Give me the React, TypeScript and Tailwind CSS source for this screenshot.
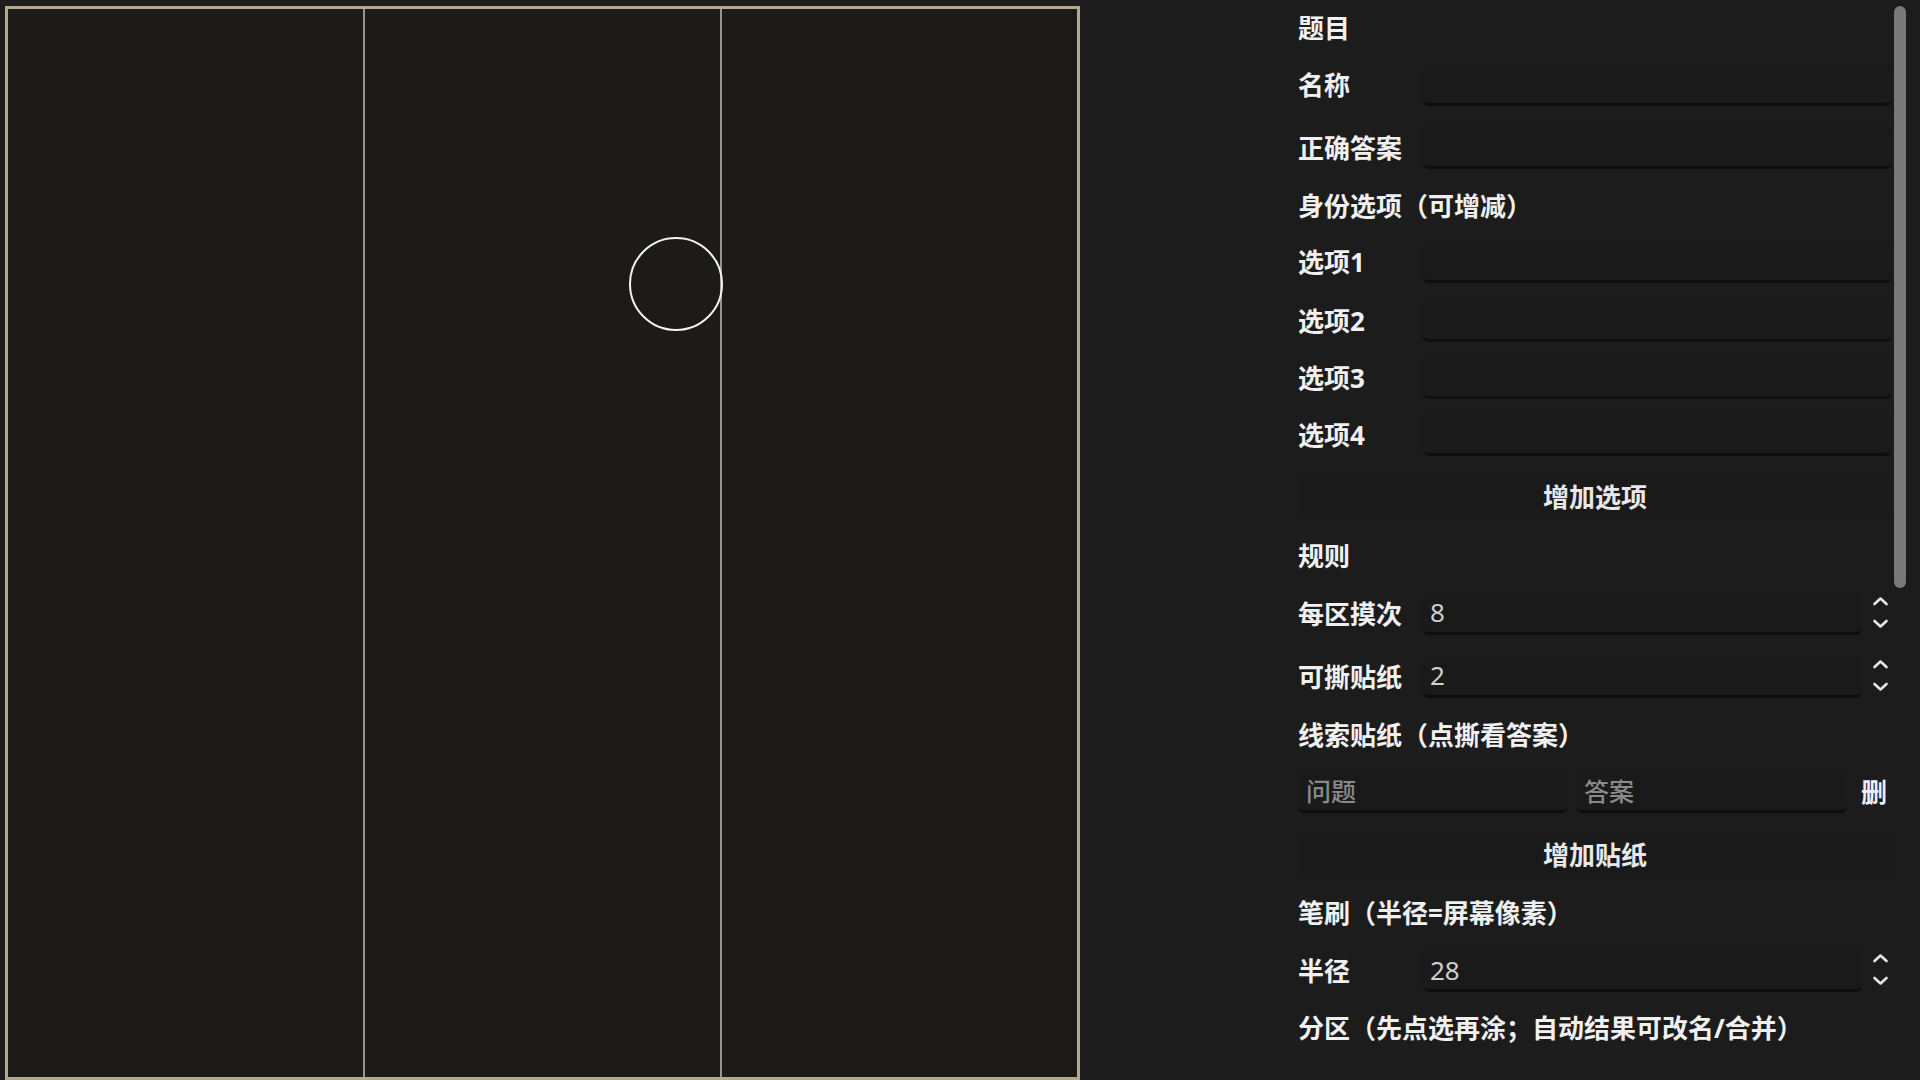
import React from "react";

const FONT = { fontFamily: '"Noto Sans", "Noto Sans CJK SC", sans-serif' };

function Heading({ text, h }: { text: string; h: string }) {
  return (
    <div className={`flex items-center ${h}`}>
      <span className="text-[26px] font-bold text-[#f0f0f0] leading-none">{text}</span>
    </div>
  );
}

function Spin() {
  return (
    <div className="w-[30px] pl-[6px] flex flex-col items-center gap-[13px] mb-[3px]">
      <svg width="17" height="10" viewBox="0 0 17 10">
        <path d="M2.5 8 L8.5 2.5 L14.5 8" fill="none" stroke="#e4e4e4" strokeWidth="2.6" strokeLinecap="round" strokeLinejoin="round" />
      </svg>
      <svg width="17" height="10" viewBox="0 0 17 10">
        <path d="M2.5 2 L8.5 7.5 L14.5 2" fill="none" stroke="#e4e4e4" strokeWidth="2.6" strokeLinecap="round" strokeLinejoin="round" />
      </svg>
    </div>
  );
}

function Field({ label, h, value, number }: { label: string; h: string; value?: string; number?: boolean }) {
  return (
    <div className={`flex items-center ${h}`}>
      <span className="w-[125px] shrink-0 text-[26px] font-bold text-[#f0f0f0] leading-none">{label}</span>
      <input
        readOnly
        defaultValue={value ?? ""}
        className="flex-1 min-w-0 h-[42px] rounded-md bg-[#1a1a1a] border-b-[3px] border-[#0e0e0e] pl-[7px] text-[26px] text-[#cfcfcf] outline-none"
        style={FONT}
      />
      {number && <Spin />}
    </div>
  );
}

function Button({ text, h }: { text: string; h: string }) {
  return (
    <div className={`flex items-center ${h}`}>
      <div className="w-full h-[40px] rounded-md bg-[#1a1a1a] flex items-center justify-center">
        <span className="text-[26px] font-semibold text-[#e8e8e8] leading-none">{text}</span>
      </div>
    </div>
  );
}

export default function App() {
  return (
    <div className="w-[1920px] h-[1080px] bg-[#1c1c1c] flex overflow-hidden" style={FONT}>
      <div className="ml-[5px] mt-[6px] w-[1075px] h-[1074px] shrink-0 border-[3px] border-[#b3aa8e] bg-[#1c1b1a] relative flex">
        <div className="flex-1" />
        <div className="w-[2px] bg-[#949494]" />
        <div className="flex-1" />
        <div className="w-[2px] bg-[#949494]" />
        <div className="flex-1" />
        <svg className="absolute left-[620px] top-[227px]" width="96" height="96" viewBox="0 0 96 96">
          <circle cx="48" cy="48" r="46" fill="none" stroke="#f2f2f2" strokeWidth="2" />
        </svg>
      </div>

      <div className="ml-[218px] w-[594px] shrink-0 flex flex-col">
        <Heading text="题目" h="h-[55px]" />
        <Field label="名称" h="h-[60px]" />
        <Field label="正确答案" h="h-[65px]" />
        <Heading text="身份选项（可增减）" h="h-[52px]" />
        <Field label="选项1" h="h-[60px]" />
        <Field label="选项2" h="h-[57px]" />
        <Field label="选项3" h="h-[57px]" />
        <Field label="选项4" h="h-[58px]" />
        <Button text="增加选项" h="h-[66px]" />
        <Heading text="规则" h="h-[52px]" />
        <Field label="每区摸次" h="h-[63px]" value="8" number />
        <Field label="可撕贴纸" h="h-[63px]" value="2" number />
        <Heading text="线索贴纸（点撕看答案）" h="h-[54px]" />
        <div className="flex items-center h-[60px]">
          <input
            readOnly
            placeholder="问题"
            className="w-[270px] h-[42px] rounded-md bg-[#1a1a1a] border-b-[3px] border-[#0e0e0e] pl-[8px] text-[25px] font-medium text-[#cfcfcf] placeholder:text-[#8a8a8a] outline-none"
            style={FONT}
          />
          <input
            readOnly
            placeholder="答案"
            className="ml-[8px] w-[271px] h-[42px] rounded-md bg-[#1a1a1a] border-b-[3px] border-[#0e0e0e] pl-[8px] text-[25px] font-medium text-[#cfcfcf] placeholder:text-[#8a8a8a] outline-none"
            style={FONT}
          />
          <span className="ml-[14px] text-[26px] font-bold text-[#f0f0f0] leading-none">删</span>
        </div>
        <Button text="增加贴纸" h="h-[66px]" />
        <Heading text="笔刷（半径=屏幕像素）" h="h-[50px]" />
        <Field label="半径" h="h-[66px]" value="28" number />
        <Heading text="分区（先点选再涂；自动结果可改名/合并）" h="h-[48px]" />
      </div>

      <div className="ml-[2px] mt-[6px] w-[12px] h-[582px] rounded-full bg-[#787878] shrink-0" />
    </div>
  );
}
